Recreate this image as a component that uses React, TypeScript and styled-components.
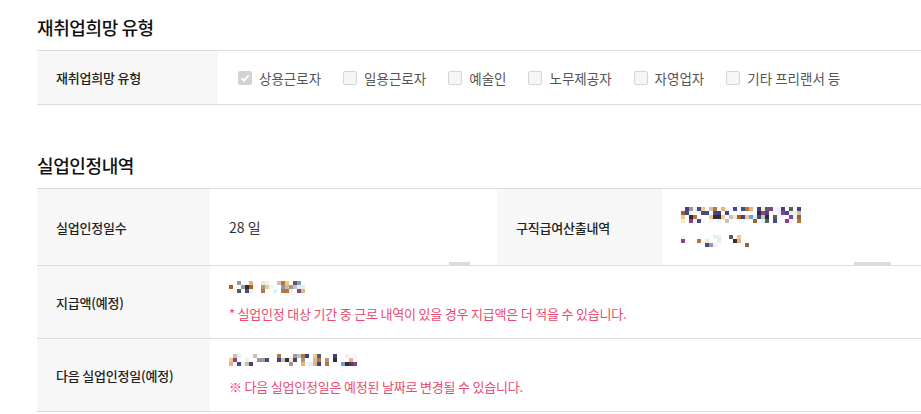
import React from "react";
import styled, { createGlobalStyle } from "styled-components";

const GlobalStyle = createGlobalStyle`
  html, body { margin: 0; padding: 0; background: #fff; }
  body {
    font-family: "Noto Sans CJK KR", "Noto Sans", sans-serif;
    color: #333;
    -webkit-font-smoothing: antialiased;
  }
`;

const Page = styled.div`
  padding: 14px 0 0 37px;
  width: 921px;
  box-sizing: border-box;
  overflow: hidden;
`;

const Section = styled.section<{ $gap?: number }>`
  margin-bottom: ${(p) => p.$gap ?? 0}px;
`;

const Title = styled.h2`
  margin: 0 0 10px;
  font-size: 18px;
  line-height: 26px;
  font-weight: 500;
  color: #111;
  letter-spacing: -0.4px;
`;

const Table = styled.div`
  border-top: 1px solid #dcdcdc;
`;

const Row = styled.div<{ $cols: string; $h: number }>`
  display: grid;
  grid-template-columns: ${(p) => p.$cols};
  min-height: ${(p) => p.$h}px;
  border-bottom: 1px solid #dcdcdc;
`;

const Label = styled.div`
  background: #f7f7f7;
  display: flex;
  align-items: center;
  padding-left: 19px;
  font-size: 13px;
  font-weight: 500;
  color: #222;
  letter-spacing: -0.2px;
`;

const Value = styled.div`
  position: relative;
  display: flex;
  flex-direction: column;
  justify-content: center;
  padding-left: 19px;
  font-size: 14px;
  color: #333;
`;

const CheckList = styled.div`
  display: flex;
  align-items: center;
  padding-left: 20px;
  gap: 22px;
`;

const CheckItem = styled.label`
  display: flex;
  align-items: center;
  gap: 7px;
  font-size: 13.5px;
  color: #555;
`;

const Box = styled.span<{ $checked?: boolean }>`
  width: 14px;
  height: 14px;
  box-sizing: border-box;
  border-radius: 2px;
  border: 1px solid ${(p) => (p.$checked ? "#d3d3d3" : "#d6d6d6")};
  background: ${(p) => (p.$checked ? "#d3d3d3" : "#f6f6f6")};
  display: flex;
  align-items: center;
  justify-content: center;
`;

const Note = styled.p`
  margin: 12px 0 0;
  font-size: 13px;
  line-height: 18px;
  color: #ea4a6e;
  letter-spacing: -0.2px;
`;

const ScrollThumb = styled.span<{ $right: number; $w: number }>`
  position: absolute;
  bottom: 0;
  right: ${(p) => p.$right}px;
  width: ${(p) => p.$w}px;
  height: 3px;
  background: #dcdcdc;
`;

const MosaicWrap = styled.div`
  display: flex;
  flex-direction: column;
  gap: 12px;
`;

const palette = [
  "#2f2f35", "#a0622e", "#6fa0d6", "#e8b27a", "#4a3f7a", "#f6e9c9",
  "#8a3f8f", "#3f4d88", "#c9c2b0", "#9a9a9a", "#fbfbfb", "#d8f2fa",
  "#b8763b", "#5d5d5d", "#f3c88c", "#efefef", "#f5f5f5", "#e6f7fb",
];

function Mosaic({ w, h, seed, density = 0.6 }: { w: number; h: number; seed: number; density?: number }) {
  const cell = 4;
  const cols = Math.floor(w / cell);
  const rows = Math.floor(h / cell);
  let s = seed;
  const rnd = () => {
    s = (s * 9301 + 49297) % 233280;
    return s / 233280;
  };
  const rects: React.ReactNode[] = [];
  for (let r = 0; r < rows; r++) {
    for (let c = 0; c < cols; c++) {
      if (rnd() > density) continue;
      const col = palette[Math.floor(rnd() * palette.length)];
      rects.push(<rect key={`${r}-${c}`} x={c * cell} y={r * cell} width={cell} height={cell} fill={col} />);
    }
  }
  return (
    <svg width={w} height={h} viewBox={`0 0 ${w} ${h}`} shapeRendering="crispEdges">
      {rects}
    </svg>
  );
}

const Check = () => (
  <svg width="10" height="10" viewBox="0 0 10 10">
    <path d="M1.5 5.2 L4 7.6 L8.6 2.4" stroke="#fff" strokeWidth="1.8" fill="none" />
  </svg>
);

const types = ["상용근로자", "일용근로자", "예술인", "노무제공자", "자영업자", "기타 프리랜서 등"];

export default function App() {
  return (
    <>
      <GlobalStyle />
      <Page>
        <Section $gap={47}>
          <Title>재취업희망 유형</Title>
          <Table>
            <Row $cols="181px 1fr" $h={53}>
              <Label>재취업희망 유형</Label>
              <CheckList>
                {types.map((t, i) => (
                  <CheckItem key={t}>
                    <Box $checked={i === 0}>{i === 0 && <Check />}</Box>
                    {t}
                  </CheckItem>
                ))}
              </CheckList>
            </Row>
          </Table>
        </Section>
        <Section>
          <Title>실업인정내역</Title>
          <Table>
            <Row $cols="173px 287px 165px 1fr" $h={76}>
              <Label>실업인정일수</Label>
              <Value>
                28 일
                <ScrollThumb $right={27} $w={21} />
              </Value>
              <Label>구직급여산출내역</Label>
              <Value>
                <MosaicWrap>
                  <Mosaic w={120} h={16} seed={7} />
                  <Mosaic w={68} h={12} seed={23} density={0.35} />
                </MosaicWrap>
                <ScrollThumb $right={30} $w={37} />
              </Value>
            </Row>
            <Row $cols="173px 1fr" $h={72}>
              <Label>지급액(예정)</Label>
              <Value>
                <Mosaic w={76} h={12} seed={41} />
                <Note>* 실업인정 대상 기간 중 근로 내역이 있을 경우 지급액은 더 적을 수 있습니다.</Note>
              </Value>
            </Row>
            <Row $cols="173px 1fr" $h={72}>
              <Label>다음 실업인정일(예정)</Label>
              <Value>
                <Mosaic w={128} h={12} seed={59} density={0.45} />
                <Note>※ 다음 실업인정일은 예정된 날짜로 변경될 수 있습니다.</Note>
              </Value>
            </Row>
          </Table>
        </Section>
      </Page>
    </>
  );
}
